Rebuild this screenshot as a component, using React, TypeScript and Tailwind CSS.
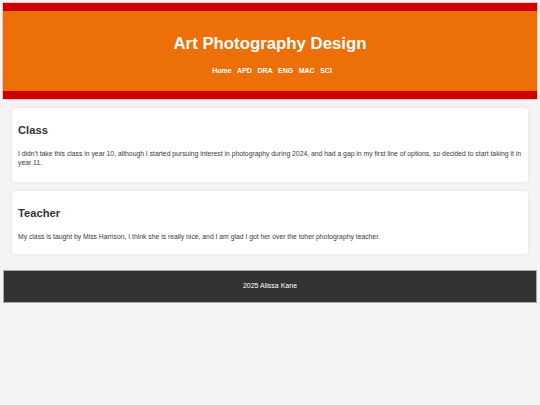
export default function App() {
  const links = ["Home", "APD", "DRA", "ENG", "MAC", "SCI"];

  return (
    <div className="min-h-[405px] bg-[#f4f4f4] pt-[3px] font-['Liberation_Sans',Arial,sans-serif] text-[#333]">
      <header className="mx-[3px] border-y-[8px] border-[#cc0000] bg-[#ed6f07] text-center text-white shadow-[0_0_0_1px_#f5c6c0]">
        <div className="flex h-[80px] flex-col items-center justify-center pt-[7px]">
          <h1 className="text-[16.8px] font-bold leading-[22px]">Art Photography Design</h1>
          <nav className="mt-[11px] ml-[4px] flex gap-[5.5px] text-[7px] font-bold leading-[10px]">
            {links.map((l) => (
              <a key={l} href="#" className="text-white">
                {l}
              </a>
            ))}
          </nav>
        </div>
      </header>

      <main className="mx-[12px] mt-[9px] flex flex-col gap-[9px]">
        <section className="rounded-[4px] bg-white px-[6px] pt-[15px] pb-[15px] shadow-[0_0_4px_rgba(0,0,0,0.08)]">
          <h2 className="text-[11.2px] font-bold leading-[14px]">Class</h2>
          <p className="mt-[12px] text-[6.8px] leading-[9px] text-[#3a3a3a]">
            I didn't take this class in year 10, although I started pursuing interest in photography during 2024, and had a gap in my first line of options, so decided to start taking it in year 11.
          </p>
        </section>
        <section className="rounded-[4px] bg-white px-[6px] pt-[15px] pb-[13px] shadow-[0_0_4px_rgba(0,0,0,0.08)]">
          <h2 className="text-[11.2px] font-bold leading-[14px]">Teacher</h2>
          <p className="mt-[12px] text-[6.8px] leading-[9px] text-[#3a3a3a]">
            My class is taught by Miss Harrison, I think she is really nice, and I am glad I got her over the toher photography teacher.
          </p>
        </section>
      </main>

      <footer className="mx-[3px] mt-[16px] flex h-[33px] items-center justify-center border border-[#aaa] bg-[#333] text-[7px] text-white">
        2025 Alissa Kane
      </footer>
    </div>
  );
}
